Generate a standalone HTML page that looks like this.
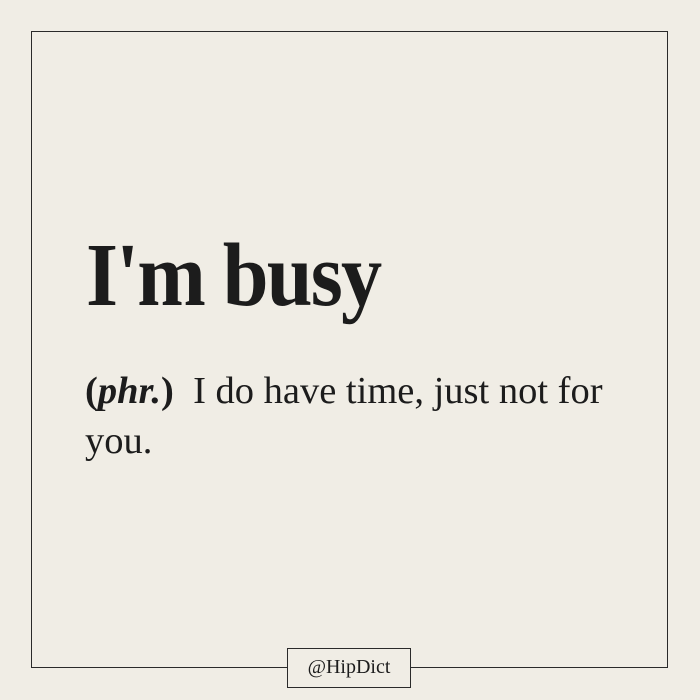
<!DOCTYPE html>
<html><head><style>
html,body{margin:0;padding:0}
body{width:700px;height:700px;background:#f0ede5;position:relative;overflow:hidden;font-family:"Liberation Serif",serif;color:#1c1c1c}
.frame{position:absolute;left:31px;top:31px;width:637px;height:637px;border:1.5px solid #2a2a2a;box-sizing:border-box}
h1{position:absolute;left:86px;top:231px;margin:0;font-size:90px;font-weight:bold;letter-spacing:-2px;line-height:1;transform:scaleX(0.915);transform-origin:left top;white-space:nowrap}
.def{position:absolute;left:85px;top:366px;width:560px;font-size:38.5px;line-height:50px}
.tag{position:absolute;left:287px;top:648px;width:124px;height:40px;border:1.5px solid #2a2a2a;box-sizing:border-box;background:#f0ede5;text-align:center;line-height:37px;font-size:20px}
</style></head><body>
<div class="frame"></div>
<h1>I'm busy</h1>
<div class="def"><b>(<i>phr.</i>)</b>&nbsp; I do have time, just not for you.</div>
<div class="tag">@HipDict</div>
</body></html>
